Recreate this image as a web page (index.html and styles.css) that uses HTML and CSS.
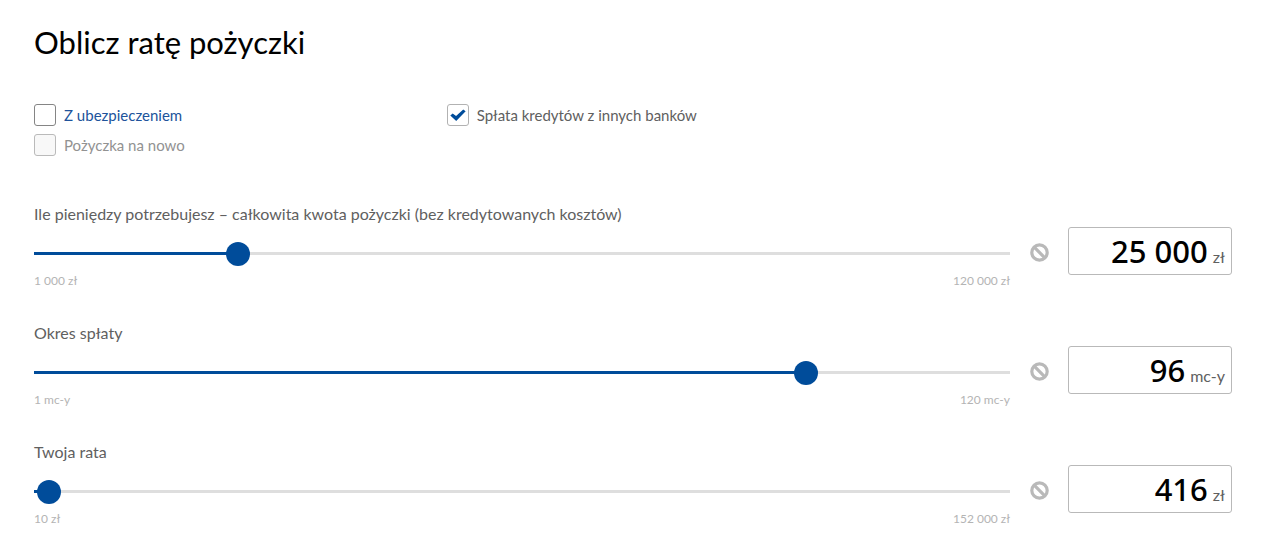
FILE: index.html
```html
<!DOCTYPE html>
<html lang="pl">
<head>
<meta charset="utf-8">
<meta name="viewport" content="width=device-width, initial-scale=1">
<title>Oblicz ratę pożyczki</title>
<link rel="stylesheet" href="styles.css">
</head>
<body>
<svg class="sprite" aria-hidden="true">
  <symbol id="blocked" viewBox="0 0 19 19">
    <circle cx="9.5" cy="9.5" r="7.7" fill="none" stroke="currentColor" stroke-width="3.2"/>
    <path d="M4.2 4.2 14.8 14.8" stroke="currentColor" stroke-width="3.2"/>
  </symbol>
</svg>
<form class="calculator">
  <h1 class="title">Oblicz ratę pożyczki</h1>

  <div class="options">
    <div class="options-column">
      <label class="option option-link"><input class="checkbox" type="checkbox"><span>Z ubezpieczeniem</span></label>
      <label class="option option-disabled"><input class="checkbox" type="checkbox" disabled><span>Pożyczka na nowo</span></label>
    </div>
    <div class="options-column">
      <label class="option option-checked"><input class="checkbox" type="checkbox" checked><span>Spłata kredytów z innych banków</span></label>
    </div>
  </div>

  <div class="field">
    <label class="field-label" for="amount-range">Ile pieniędzy potrzebujesz – całkowita kwota pożyczki (bez kredytowanych kosztów)</label>
    <div class="field-row">
      <div class="range">
        <input class="slider" id="amount-range" type="range" min="1000" max="120000" value="25000" style="--fill: 20.2%">
        <div class="limits"><span>1 000 zł</span><span>120 000 zł</span></div>
      </div>
      <svg class="blocked" aria-hidden="true"><use href="#blocked"/></svg>
      <label class="amount"><input class="amount-input" type="text" aria-label="Kwota" value="25 000"><span class="unit">zł</span></label>
    </div>
  </div>

  <div class="field">
    <label class="field-label" for="period-range">Okres spłaty</label>
    <div class="field-row">
      <div class="range">
        <input class="slider" id="period-range" type="range" min="1" max="120" value="96" style="--fill: 79.8%">
        <div class="limits"><span>1 mc-y</span><span>120 mc-y</span></div>
      </div>
      <svg class="blocked" aria-hidden="true"><use href="#blocked"/></svg>
      <label class="amount"><input class="amount-input" type="text" aria-label="Okres" value="96"><span class="unit">mc-y</span></label>
    </div>
  </div>

  <div class="field">
    <label class="field-label" for="rate-range">Twoja rata</label>
    <div class="field-row">
      <div class="range">
        <input class="slider" id="rate-range" type="range" min="10" max="152000" value="416" style="--fill: 1%">
        <div class="limits"><span>10 zł</span><span>152 000 zł</span></div>
      </div>
      <svg class="blocked" aria-hidden="true"><use href="#blocked"/></svg>
      <label class="amount"><input class="amount-input" type="text" aria-label="Rata" value="416"><span class="unit">zł</span></label>
    </div>
  </div>
</form>
</body>
</html>
```

FILE: styles.css
```css
* {
  box-sizing: border-box;
}

body {
  margin: 0;
  background: #fff;
  color: #606060;
  font-family: Lato, "Open Sans", sans-serif;
  font-size: 16px;
}

.sprite {
  display: none;
}

.calculator {
  padding: 20px 53px 24px 34px;
}

.title {
  margin: 0 0 36px;
  color: #000;
  font-size: 31px;
  font-weight: 400;
  line-height: 44px;
}

.options {
  display: grid;
  grid-template-columns: repeat(3, 1fr);
  gap: 40px;
  margin-bottom: 42px;
}

.options-column {
  display: flex;
  flex-direction: column;
}

.option {
  display: flex;
  align-items: center;
  gap: 8px;
  height: 30px;
  font-size: 15px;
}

.option-link {
  color: #20539b;
}

.option-disabled {
  color: #929292;
}

.checkbox {
  appearance: none;
  flex: none;
  display: grid;
  place-items: center;
  width: 22px;
  height: 22px;
  margin: 0;
  border: 1px solid #858585;
  border-radius: 3px;
  background: #fff;
}

.checkbox:disabled {
  border-color: #bababa;
  background: #f8f8f8;
}

.checkbox:checked {
  border-color: #b2b2b2;
}

.checkbox:checked::before {
  content: "";
  width: 16px;
  height: 12px;
  background: #004c9a;
  clip-path: polygon(4% 54%, 19% 38%, 40% 58%, 85% 4%, 100% 18%, 41% 100%);
}

.field {
  height: 119px;
}

.field:last-child {
  height: auto;
}

.field-label {
  display: block;
  padding-bottom: 1px;
  line-height: 24px;
}

.field-row {
  display: flex;
  align-items: flex-start;
}

.range {
  flex: 1;
  padding-top: 14px;
}

.slider {
  appearance: none;
  display: block;
  width: 100%;
  height: 24px;
  margin: 0;
  background: transparent;
}

.slider::-webkit-slider-runnable-track {
  height: 3px;
  background: linear-gradient(to right, #004c9a var(--fill), #dedede var(--fill));
}

.slider::-webkit-slider-thumb {
  appearance: none;
  width: 24px;
  height: 24px;
  margin-top: -10px;
  border-radius: 50%;
  background: #004c9a;
}

.limits {
  display: flex;
  justify-content: space-between;
  padding-top: 6px;
  color: #b4b4b4;
  font-size: 12px;
  line-height: 20px;
}

.blocked {
  flex: none;
  width: 19px;
  height: 19px;
  margin: 16px 19px 0 20px;
  color: #b9b9b9;
}

.amount {
  display: flex;
  align-items: baseline;
  gap: 5px;
  width: 164px;
  height: 48px;
  padding: 0 6px;
  border: 1px solid #b9b9b9;
  border-radius: 3px;
}

.amount-input {
  flex: 1;
  min-width: 0;
  height: 46px;
  padding: 0;
  border: 0;
  outline: 0;
  background: transparent;
  color: #000;
  font-family: "Noto Sans", sans-serif;
  font-size: 31px;
  font-weight: 500;
  text-align: right;
}

.unit {
  font-size: 16px;
}
```
